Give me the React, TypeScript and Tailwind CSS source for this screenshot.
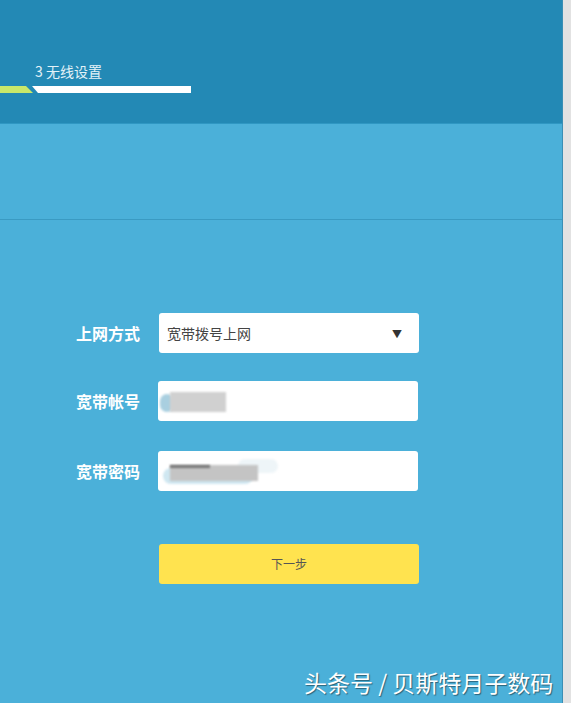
import React from "react";

export default function App() {
  const font = { fontFamily: '"Noto Sans CJK SC", "Noto Sans", sans-serif' };
  return (
    <div className="w-[571px] h-[703px] flex overflow-hidden" style={font}>
      <div className="w-[562px] h-full flex flex-col bg-[#4bb0d9] relative">
        <div className="h-[124px] bg-[#2389b5] border-b border-[#2f97c3] flex flex-col pt-[62px]">
          <div className="pl-[35px] text-[14px] leading-[18px] text-[#e3f2f8]">3 无线设置</div>
          <div className="relative h-[8px] mt-[6px]">
            <div className="absolute left-0 top-0 h-[7px] w-[33px] bg-[#c8e86a] [clip-path:polygon(0_0,26px_0,33px_100%,0_100%)]" />
            <div className="absolute left-[32px] top-0 h-[7px] w-[159px] bg-white [clip-path:polygon(0_0,100%_0,100%_100%,6px_100%)]" />
          </div>
        </div>
        <div className="h-[96px] border-b border-[#3a9ac2]" />
        <div className="flex flex-col pt-[93px] pl-[76px] gap-[28px]">
          <div className="flex items-center gap-[19px]">
            <div className="w-[64px] text-[16px] font-bold text-white">上网方式</div>
            <div className="w-[260px] h-[40px] bg-white rounded-[3px] flex items-center justify-between pl-[8px] pr-[17px] text-[14px] text-[#444]">
              <span>宽带拨号上网</span>
              <span className="text-[10px] text-[#333]">▼</span>
            </div>
          </div>
          <div className="flex items-center gap-[18px]">
            <div className="w-[64px] text-[16px] font-bold text-white">宽带帐号</div>
            <div className="w-[260px] h-[40px] bg-white rounded-[3px] relative">
              <div className="absolute left-[2px] top-[13px] w-[14px] h-[18px] rounded-full bg-[#a9cfe0] blur-[1px]" />
              <div className="absolute left-[12px] top-[11px] w-[56px] h-[20px] bg-[#d0d0d0] blur-[1px]" />
            </div>
          </div>
          <div className="flex items-center gap-[18px] mt-[2px]">
            <div className="w-[64px] text-[16px] font-bold text-white">宽带密码</div>
            <div className="w-[260px] h-[40px] bg-white rounded-[3px] relative">
              <div className="absolute left-[5px] top-[17px] w-[90px] h-[16px] rounded-full bg-[#cfe7f1] blur-[1px]" />
              <div className="absolute left-[80px] top-[8px] w-[40px] h-[14px] rounded-full bg-[#eef5f8] blur-[1px]" />
              <div className="absolute left-[12px] top-[14px] w-[88px] h-[16px] bg-[#c4c4c4] blur-[1px]" />
              <div className="absolute left-[12px] top-[14px] w-[40px] h-[3px] bg-[#777] blur-[1px]" />
            </div>
          </div>
          <div className="pl-[83px] mt-[25px]">
            <div className="w-[260px] h-[40px] bg-[#ffe34f] rounded-[3px] flex items-center justify-center text-[12px] text-[#555]">下一步</div>
          </div>
        </div>
        <div className="absolute left-[304px] top-[665px] text-[23px] leading-[34px] text-white [text-shadow:1px_1px_1px_rgba(0,0,0,0.45)]" style={{ fontFamily: '"Noto Sans CJK SC", sans-serif' }}>
          头条号 / 贝斯特月子数码
        </div>
      </div>
      <div className="w-[9px] h-full bg-[#e2e2e2] border-l border-[#3a8fb5]" />
    </div>
  );
}
